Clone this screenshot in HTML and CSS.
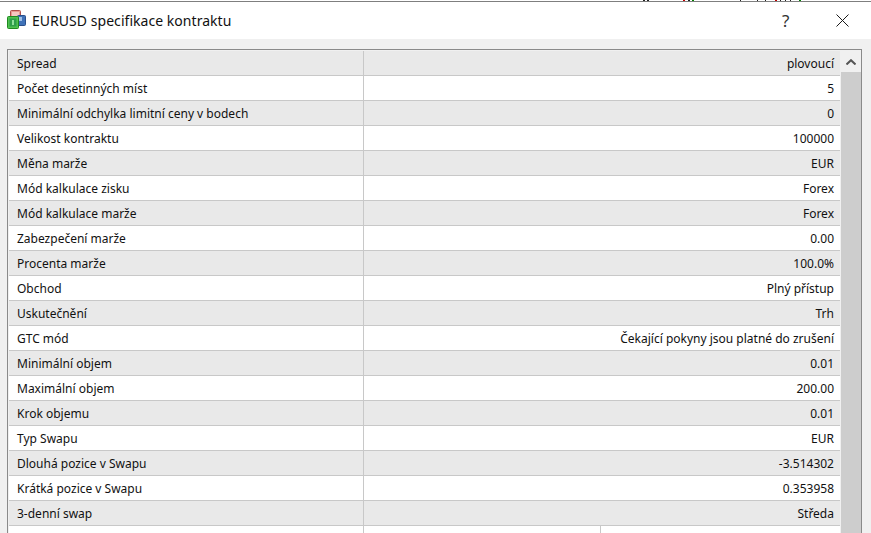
FILE: index.html
```html
<!DOCTYPE html>
<html lang="cs">
<head>
<meta charset="utf-8">
<title>EURUSD specifikace kontraktu</title>
<link rel="stylesheet" href="styles.css">
</head>
<body>
<div class="window">
  <div class="strip">
    <svg class="strip-svg" width="871" height="2" viewBox="0 0 871 2">
      <rect x="0" y="0" width="871" height="1" fill="#ffffff"/>
      <rect x="0" y="1" width="871" height="1" fill="#7f7f7f"/>
      <rect x="643" y="0" width="2" height="1" fill="#222"/><rect x="647" y="0" width="2" height="1" fill="#222"/>
      <rect x="683" y="0" width="2" height="1" fill="#c00000"/><rect x="688" y="0" width="2" height="1" fill="#222"/><rect x="692" y="0" width="2" height="1" fill="#008000"/>
      <rect x="740" y="0" width="1" height="1" fill="#222"/><rect x="757" y="0" width="1" height="1" fill="#222"/><rect x="765" y="0" width="1" height="1" fill="#222"/>
      <rect x="775" y="0" width="2" height="1" fill="#c00000"/><rect x="780" y="0" width="1" height="1" fill="#222"/><rect x="785" y="0" width="1" height="1" fill="#222"/><rect x="790" y="0" width="1" height="1" fill="#222"/>
      <rect x="799" y="0" width="2" height="1" fill="#008000"/>
    </svg>
  </div>
  <header class="titlebar">
    <svg class="app-icon" width="20" height="20" viewBox="0 0 20 20">
      <rect x="3.5" y="0.5" width="10" height="9" rx="1" fill="#e89a90" stroke="#b0504a"/>
      <rect x="5" y="2" width="7" height="5" fill="#f4c8c0"/>
      <rect x="10.5" y="5.5" width="8" height="10" rx="1" fill="#3f72b8" stroke="#2a4f8a"/>
      <rect x="12" y="7" width="3" height="4" fill="#9fc0e8"/>
      <rect x="0.5" y="6.5" width="11" height="12" rx="1" fill="#4fc24f" stroke="#1f8a1f"/>
      <rect x="2.5" y="8.5" width="7" height="8" fill="#2e9e4a"/>
      <rect x="5" y="10" width="2" height="5" fill="#8fe09a"/>
    </svg>
    <span class="title">EURUSD specifikace kontraktu</span>
    <span class="help">?</span>
    <svg class="close" width="13" height="13" viewBox="0 0 13 13">
      <path d="M0.5 0.5 L12.5 12.5 M12.5 0.5 L0.5 12.5" stroke="#1a1a1a" stroke-width="1" fill="none"/>
    </svg>
  </header>
  <main class="content">
    <div class="frame">
      <div class="table">
        <div class="row alt"><div class="key">Spread</div><div class="val">plovoucí</div></div>
        <div class="row"><div class="key">Počet desetinných míst</div><div class="val">5</div></div>
        <div class="row alt"><div class="key">Minimální odchylka limitní ceny v bodech</div><div class="val">0</div></div>
        <div class="row"><div class="key">Velikost kontraktu</div><div class="val">100000</div></div>
        <div class="row alt"><div class="key">Měna marže</div><div class="val">EUR</div></div>
        <div class="row"><div class="key">Mód kalkulace zisku</div><div class="val">Forex</div></div>
        <div class="row alt"><div class="key">Mód kalkulace marže</div><div class="val">Forex</div></div>
        <div class="row"><div class="key">Zabezpečení marže</div><div class="val">0.00</div></div>
        <div class="row alt"><div class="key">Procenta marže</div><div class="val">100.0%</div></div>
        <div class="row"><div class="key">Obchod</div><div class="val">Plný přístup</div></div>
        <div class="row alt"><div class="key">Uskutečnění</div><div class="val">Trh</div></div>
        <div class="row"><div class="key">GTC mód</div><div class="val">Čekající pokyny jsou platné do zrušení</div></div>
        <div class="row alt"><div class="key">Minimální objem</div><div class="val">0.01</div></div>
        <div class="row"><div class="key">Maximální objem</div><div class="val">200.00</div></div>
        <div class="row alt"><div class="key">Krok objemu</div><div class="val">0.01</div></div>
        <div class="row"><div class="key">Typ Swapu</div><div class="val">EUR</div></div>
        <div class="row alt"><div class="key">Dlouhá pozice v Swapu</div><div class="val">-3.514302</div></div>
        <div class="row"><div class="key">Krátká pozice v Swapu</div><div class="val">0.353958</div></div>
        <div class="row alt"><div class="key">3-denní swap</div><div class="val">Středa</div></div>
        <div class="row split"><div class="key"></div><div class="mid"></div><div class="end"></div></div>
      </div>
      <div class="scrollbar">
        <div class="scroll-btn">
          <svg width="10" height="6" viewBox="0 0 10 6"><path d="M0.5 5.5 L5 1.2 L9.5 5.5" stroke="#555" stroke-width="2" fill="none"/></svg>
        </div>
        <div class="thumb"></div>
      </div>
    </div>
  </main>
</div>
</body>
</html>
```
FILE: styles.css
```css
html, body { margin: 0; padding: 0; }
body { width: 871px; height: 533px; overflow: hidden; background: #f0f0f0; font-family: "Noto Sans", "Open Sans", sans-serif; color: #111; }
.window { display: flex; flex-direction: column; height: 533px; overflow: hidden; }
.strip { height: 2px; flex: none; line-height: 0; }
.strip-svg { display: block; }
.titlebar { height: 37px; flex: none; background: #fff; display: flex; align-items: center; padding-left: 7px; }
.app-icon { flex: none; margin-top: -1px; }
.title { margin-left: 5px; font-size: 14px; letter-spacing: 0.04px; color: #111; flex: 1; }
.help { font-size: 17px; width: 14px; margin-right: 40px; color: #333; }
.close { flex: none; margin-right: 22px; }
.content { flex: 1; min-height: 0; padding: 10px 9px 0 7px; }
.frame { display: flex; height: 100%; border: 1px solid #8a8a8a; border-bottom: 0; padding-top: 1px; background: #f0f0f0; box-sizing: border-box; }
.table { width: 831px; flex: none; padding-left: 1px; box-sizing: content-box; }
.row { display: flex; height: 25px; box-sizing: border-box; border-bottom: 1px solid #c8c8c8; background: #fff; font-size: 12px; line-height: 26px; }
.row.alt { background: #e9e9e9; }
.row.split { border-bottom: 0; }
.key { width: 355px; height: 24px; flex: none; padding-left: 8px; box-sizing: border-box; border-right: 1px solid #c8c8c8; white-space: nowrap; }
.val { flex: 1; height: 24px; text-align: right; padding-right: 6px; white-space: nowrap; }
.mid { width: 236px; flex: none; border-right: 1px solid #c8c8c8; }
.end { flex: 1; }
.scrollbar { width: 20px; flex: none; margin-left: 1px; display: flex; flex-direction: column; }
.scroll-btn { height: 21px; flex: none; display: flex; align-items: center; justify-content: center; }
.thumb { flex: 1; background: #cdcdcd; }
```
